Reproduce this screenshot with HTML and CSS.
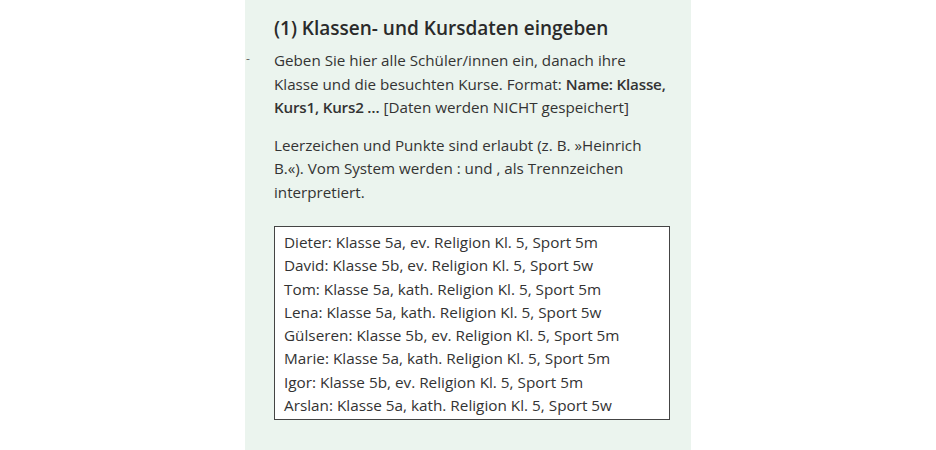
FILE: index.html
```html
<!DOCTYPE html>
<html lang="de">
<head>
    <meta charset="UTF-8">
    <meta name="viewport" content="width=device-width, initial-scale=1.0">
    <title>Klassen- und Kursdaten</title>
    <link rel="stylesheet" href="styles.css">
</head>
<body>
    <div class="panel">
        <span class="marker">-</span>
        <h2>(1) Klassen- und Kursdaten eingeben</h2>
        <p>Geben Sie hier alle Schüler/innen ein, danach ihre Klasse und die besuchten Kurse. Format: <b>Name: Klasse, Kurs1, Kurs2 …</b> [Daten werden NICHT gespeichert]</p>
        <p>Leerzeichen und Punkte sind erlaubt (z. B. »Heinrich B.«). Vom System werden : und , als Trennzeichen interpretiert.</p>
        <textarea id="daten" rows="8" spellcheck="false">Dieter: Klasse 5a, ev. Religion Kl. 5, Sport 5m
David: Klasse 5b, ev. Religion Kl. 5, Sport 5w
Tom: Klasse 5a, kath. Religion Kl. 5, Sport 5m
Lena: Klasse 5a, kath. Religion Kl. 5, Sport 5w
Gülseren: Klasse 5b, ev. Religion Kl. 5, Sport 5m
Marie: Klasse 5a, kath. Religion Kl. 5, Sport 5m
Igor: Klasse 5b, ev. Religion Kl. 5, Sport 5m
Arslan: Klasse 5a, kath. Religion Kl. 5, Sport 5w</textarea>
    </div>
</body>
</html>
```

FILE: styles.css
```css
html, body {
    height: 100%;
}
body {
    margin: 0;
    background-color: #fff;
    font-family: "Open Sans", "Liberation Sans", sans-serif;
    color: #333;
}
.panel {
    position: relative;
    box-sizing: border-box;
    width: 446px;
    min-height: 100%;
    margin: 0 auto;
    padding: 15px 21px 20px 29px;
    background-color: #ebf4ee;
}
.marker {
    position: absolute;
    left: 1px;
    top: 50px;
    font-size: 12px;
    color: #666;
}
.panel h2 {
    margin: 0 0 8px;
    font-size: 19px;
    line-height: 26px;
    font-weight: 600;
    color: #2a2a2a;
}
.panel p {
    margin: 0 0 14px;
    font-size: 15.2px;
    line-height: 23.5px;
}
.panel p b {
    font-weight: 600;
    letter-spacing: -0.2px;
}
.panel textarea {
    display: block;
    box-sizing: border-box;
    width: 396px;
    height: 194px;
    margin-top: 22px;
    padding: 4px 9px 2px;
    border: 1px solid #444;
    background-color: #fff;
    font-family: inherit;
    font-size: 15.3px;
    line-height: 23.3px;
    color: #333;
    resize: none;
    overflow: hidden;
}
```
